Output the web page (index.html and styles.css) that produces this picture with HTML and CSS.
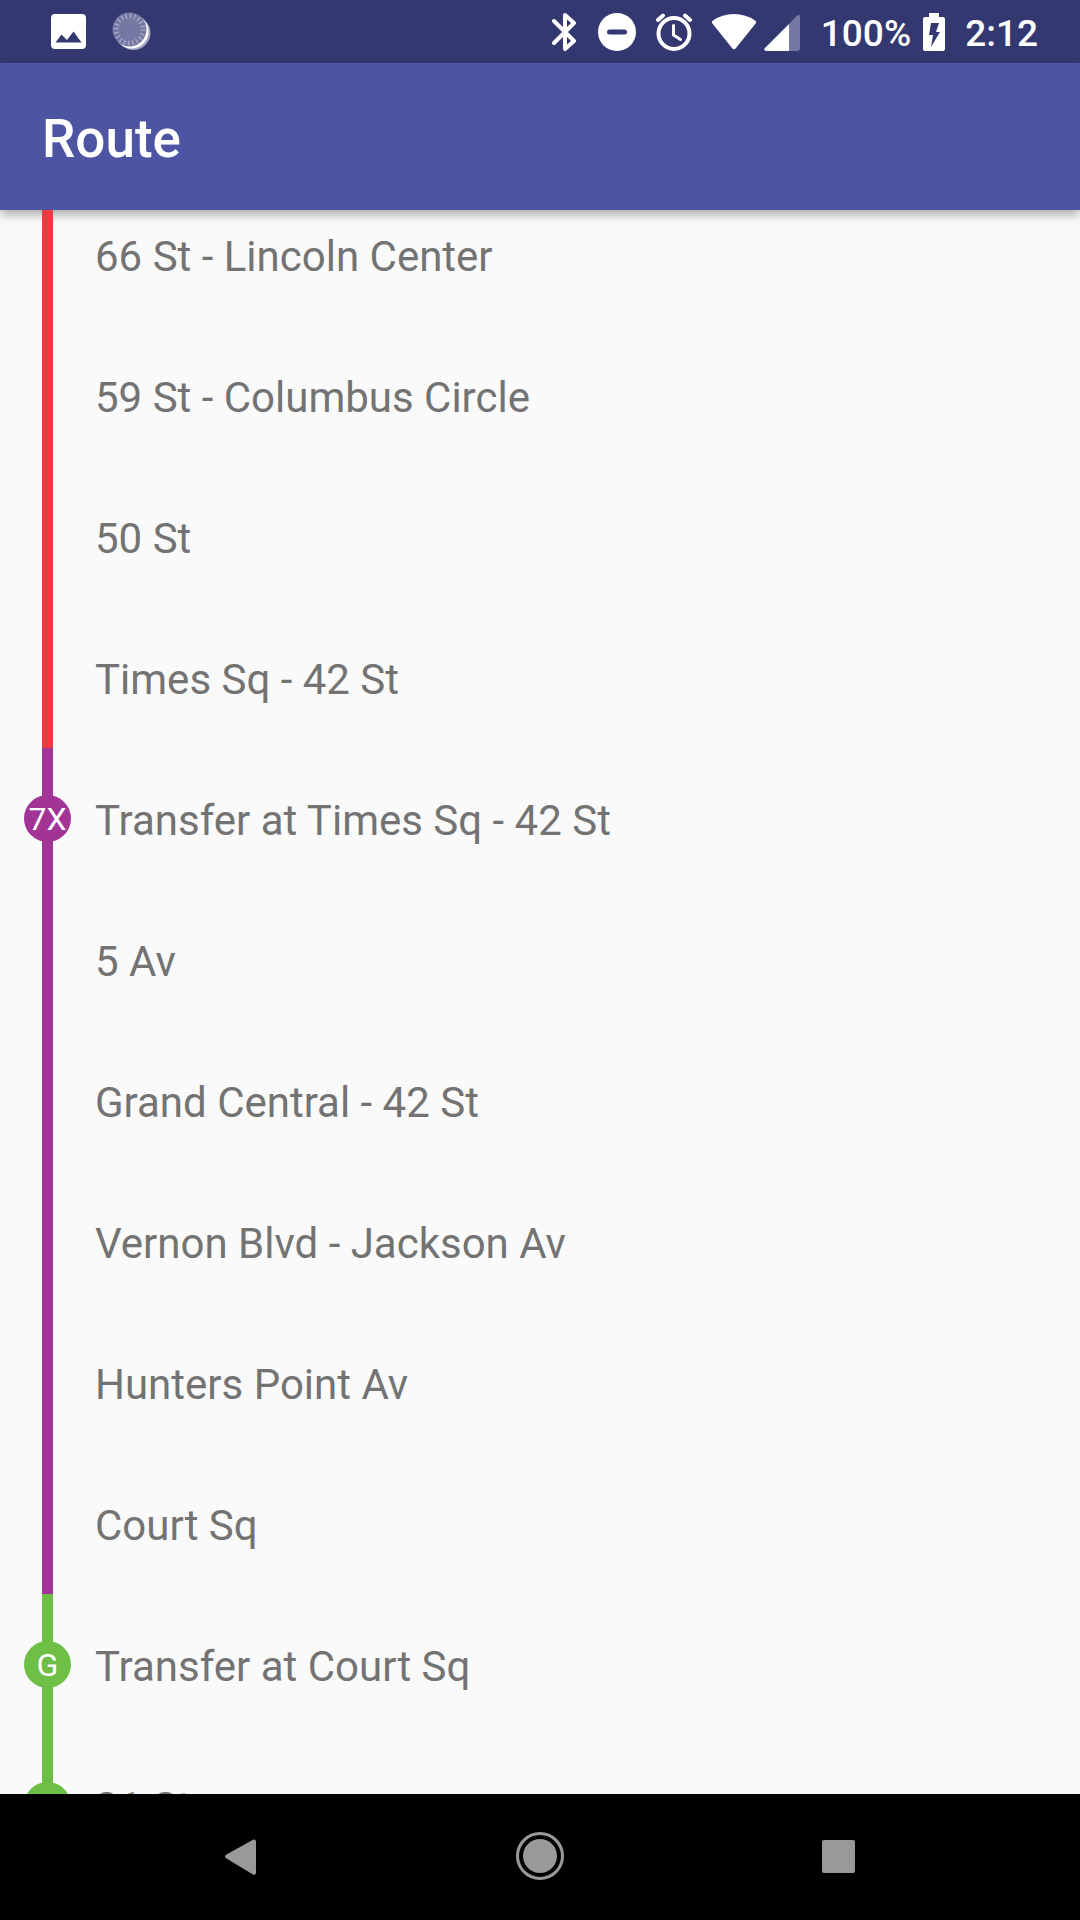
FILE: index.html
```html
<!doctype html>
<html lang="en">
    <head>
        <meta charset="UTF-8" />
        <meta name="viewport" content="width=device-width, initial-scale=1.0" />
        <title>Route</title>
        <link rel="stylesheet" href="styles.css">
    </head>
    <body>
        <div class="status-bar">
            <div class="notifications">
                <svg width="36" height="36" viewBox="0 0 36 36">
                    <path fill="#fff" fill-rule="evenodd" d="M4 0h27a4 4 0 0 1 4 4v27a4 4 0 0 1-4 4H4a4 4 0 0 1-4-4V4a4 4 0 0 1 4-4zM4.500 28.500h26L22.500 17.500 16 26 10.500 20.500z" />
                </svg>
                <svg width="40" height="40" viewBox="0 0 40 40">
                    <circle cx="21.500" cy="21" r="17" fill="#a3a4c3" />
                    <circle cx="19.500" cy="19.500" r="17" fill="#fff" />
                    <circle cx="17.500" cy="17.500" r="17" fill="#7678a4" />
                    <circle cx="17.500" cy="17.500" r="13.500" fill="none" stroke="#adaec9" stroke-width="5" stroke-dasharray="1.200 3.040" />
                </svg>
            </div>
            <div class="system">
                <svg class="bluetooth" width="24" height="38" viewBox="0 0 24 38">
                    <path fill="none" stroke="#fff" stroke-width="4" stroke-linecap="round" stroke-linejoin="round" d="M2 8l20 20-9 8V2l9 8L2 30" />
                </svg>
                <svg class="dnd" width="38" height="38" viewBox="0 0 38 38">
                    <circle cx="19" cy="19" r="19" fill="#fff" />
                    <path stroke="#333970" stroke-width="5" stroke-linecap="round" d="M11.500 19h15" />
                </svg>
                <svg class="alarm" width="38" height="38" viewBox="0 0 38 38">
                    <g fill="none" stroke="#fff" stroke-width="4" stroke-linecap="round">
                        <circle cx="19" cy="20.500" r="15.500" />
                        <path d="M3 7l5-4.500M35 7l-5-4.500" />
                        <path stroke-width="3" d="M18.500 12.500v9.500l7 4.500" />
                    </g>
                </svg>
                <svg class="wifi" width="46" height="38" viewBox="0 0 46 38">
                    <path fill="#fff" d="M1 10q-1-1.500 1-2.500Q11 1 23 1t21 6.500q2 1 1 2.500L25 35q-2 2.500-4 0z" />
                </svg>
                <svg class="signal" width="36" height="38" viewBox="0 0 36 38">
                    <path fill="#7678a4" d="M25 11l7.500-8q3.500-2.500 3.500 1V35q0 3-3 3h-8z" />
                    <path fill="#fff" d="M25 11v27H2q-3-1-1-3z" />
                </svg>
                <span class="percent">100%</span>
                <svg class="battery" width="22" height="38" viewBox="0 0 22 38">
                    <path fill="#fff" d="M6 0h10v4h4q2 0 2 2v30q0 2-2 2H2q-2 0-2-2V6q0-2 2-2h4z" />
                    <path fill="#333970" d="M8 10h8l-3 9h4L8 34l2-12H6z" />
                </svg>
                <span>2:12</span>
            </div>
        </div>
        <header class="app-bar">
            <h1>Route</h1>
        </header>
        <main class="content">
            <ul class="stops">
                <li class="stop red">66 St - Lincoln Center</li>
                <li class="stop red">59 St - Columbus Circle</li>
                <li class="stop red">50 St</li>
                <li class="stop red">Times Sq - 42 St</li>
                <li class="stop purple"><span class="bullet">7X</span>Transfer at Times Sq - 42 St</li>
                <li class="stop purple">5 Av</li>
                <li class="stop purple">Grand Central - 42 St</li>
                <li class="stop purple">Vernon Blvd - Jackson Av</li>
                <li class="stop purple">Hunters Point Av</li>
                <li class="stop purple">Court Sq</li>
                <li class="stop green"><span class="bullet">G</span>Transfer at Court Sq</li>
                <li class="stop green"><span class="bullet"></span>21 St</li>
            </ul>
        </main>
        <nav class="nav-bar">
            <button type="button" aria-label="Back">
                <svg width="48" height="48" viewBox="0 0 48 48">
                    <path fill="#999" d="M9.500 22.500L36 7.800q3-1 3 2V40.500q0 3-3 2L9.500 26.500q-3-2 0-4z" />
                </svg>
            </button>
            <button type="button" aria-label="Home">
                <svg width="48" height="48" viewBox="0 0 48 48">
                    <circle cx="24" cy="24" r="22.500" fill="none" stroke="#999" stroke-width="3" />
                    <circle cx="24" cy="24" r="17" fill="#999" />
                </svg>
            </button>
            <button type="button" aria-label="Recent apps">
                <svg width="48" height="48" viewBox="0 0 48 48">
                    <rect x="7" y="8" width="33" height="33" rx="2" fill="#999" />
                </svg>
            </button>
        </nav>
    </body>
</html>
```
FILE: styles.css
```css
* {
    box-sizing: border-box;
}
body {
    margin: 0;
    height: 100vh;
    display: flex;
    flex-direction: column;
    background-color: #fafafa;
    color: #737373;
    font-family: Roboto, sans-serif;
    font-size: 42px;
}
svg {
    display: block;
    flex-shrink: 0;
}
.status-bar {
    display: flex;
    justify-content: space-between;
    align-items: center;
    height: 63px;
    padding: 0 42px 0 51px;
    background-color: #333970;
    color: #fff;
    font-size: 37px;
    font-weight: 500;
    line-height: 44px;
}
.notifications,
.system {
    display: flex;
    align-items: center;
}
.notifications {
    gap: 25px;
}
.system span {
    padding-top: 4px;
}
.bluetooth {
    margin-right: 22px;
}
.dnd {
    margin-right: 19px;
}
.alarm {
    margin-right: 18px;
}
.wifi {
    margin-right: 7px;
}
.signal {
    margin-right: 21px;
}
.percent {
    margin-right: 12px;
}
.battery {
    margin-right: 20px;
}
.app-bar {
    position: relative;
    display: flex;
    align-items: center;
    height: 147px;
    padding: 4px 42px 0;
    background-color: #4d54a2;
    color: #fff;
    box-shadow: 0 4px 10px rgba(0, 0, 0, 0.35);
}
h1 {
    margin: 0;
    font-size: 53px;
    font-weight: 500;
}
.content {
    flex: 1;
    min-height: 0;
    overflow: hidden;
}
/* list is scrolled a little under the app bar */
.stops {
    margin: -26px 0 0;
    padding: 0;
    list-style: none;
}
.stop {
    position: relative;
    display: flex;
    align-items: center;
    height: 141px;
    padding: 4px 42px 0 95px;
}
.stop::before {
    content: "";
    position: absolute;
    top: 0;
    bottom: 0;
    left: 42px;
    width: 11px;
    background-color: var(--line);
}
.bullet {
    position: absolute;
    top: 47px;
    left: 24px;
    width: 47px;
    height: 47px;
    border-radius: 50%;
    background-color: var(--line);
    color: #fff;
    font-size: 32px;
    line-height: 49px;
    text-align: center;
}
.red {
    --line: #ee3b43;
}
.purple {
    --line: #a13494;
}
.green {
    --line: #6dbf45;
}
.nav-bar {
    display: flex;
    height: 126px;
    padding: 0 92px 2px;
    background-color: #000;
}
.nav-bar button {
    flex: 1;
    display: flex;
    justify-content: center;
    align-items: center;
    padding: 0;
    border: none;
    background: none;
}
```
